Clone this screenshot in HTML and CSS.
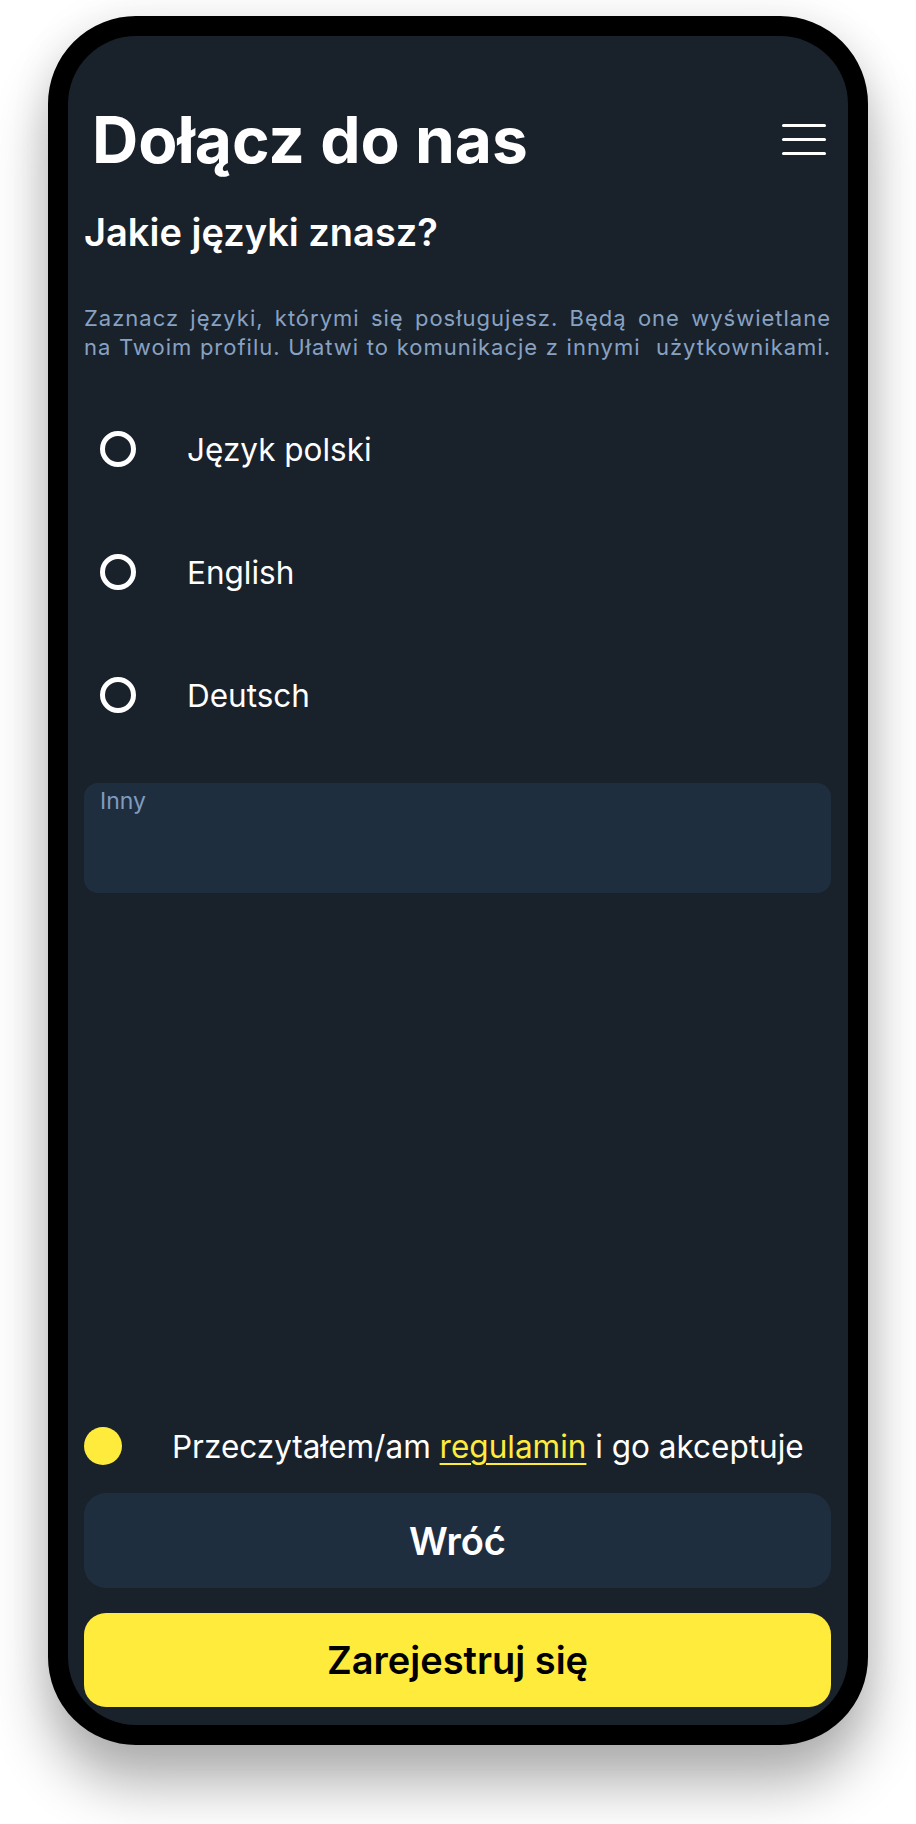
FILE: index.html
```html
<!DOCTYPE html>
<html lang="pl">
<head>
  <meta charset="UTF-8" />
  <meta name="viewport" content="width=device-width, initial-scale=1" />
  <title>Dołącz do nas</title>
  <link rel="stylesheet" href="styles.css">
</head>
<body class="signup-body">
  <div class="phone">
    <div class="screen">
      <header class="top-bar">
        <h1>Dołącz do nas</h1>
        <button class="menu-btn" aria-label="Menu">
          <span></span><span></span><span></span>
        </button>
      </header>

      <h2>Jakie języki znasz?</h2>
      <p class="hint">Zaznacz języki, którymi się posługujesz. Będą one wyświetlane<br>na Twoim profilu. Ułatwi to komunikacje z innymi&nbsp; użytkownikami.</p>

      <form id="langForm">
        <div class="lang-list">
          <label class="lang-option">
            <input type="checkbox" name="lang" value="pl" />
            <span class="ring"></span>
            <span>Język polski</span>
          </label>
          <label class="lang-option">
            <input type="checkbox" name="lang" value="en" />
            <span class="ring"></span>
            <span>English</span>
          </label>
          <label class="lang-option">
            <input type="checkbox" name="lang" value="de" />
            <span class="ring"></span>
            <span>Deutsch</span>
          </label>
        </div>

        <div class="other-field">
          <label for="otherLang">Inny</label>
          <input type="text" id="otherLang" name="otherLang" />
        </div>
      </form>

      <div class="bottom">
        <label class="terms">
          <span class="dot"></span>
          <span>Przeczytałem/am <a href="#">regulamin</a> i go akceptuje</span>
        </label>
        <button type="button" class="btn btn-back">Wróć</button>
        <button type="submit" form="langForm" class="btn btn-primary">Zarejestruj się</button>
      </div>
    </div>
  </div>
</body>
</html>
```

FILE: styles.css
```css
body.signup-body {
  margin: 0;
  padding-bottom: 90px;
  background-color: #ffffff;
  font-family: Inter, "Noto Sans", Arial, sans-serif;
  color: #ffffff;
}

.phone {
  box-sizing: border-box;
  width: 820px;
  height: 1729px;
  margin: 16px 0 0 48px;
  border: 20px solid #000000;
  border-radius: 88px;
  background: #000000;
  box-shadow: 0 40px 55px rgba(0,0,0,0.3), 0 0 40px rgba(0,0,0,0.08);
}

.screen {
  box-sizing: border-box;
  height: 100%;
  padding: 65px 17px 18px 16px;
  border-radius: 68px;
  background-color: #19212b;
  display: flex;
  flex-direction: column;
}

.top-bar {
  display: flex;
  justify-content: space-between;
  align-items: center;
  padding: 0 5px 0 8px;
}

h1 {
  margin: 0;
  font-size: 64px;
  line-height: 77px;
  font-weight: 700;
}

.menu-btn {
  display: flex;
  flex-direction: column;
  gap: 11px;
  width: 44px;
  padding: 0;
  background: none;
  border: none;
  cursor: pointer;
}
.menu-btn span {
  display: block;
  height: 3px;
  border-radius: 2px;
  background-color: #ffffff;
}

h2 {
  margin: 31px 0 0;
  font-size: 38px;
  line-height: 46px;
  font-weight: 600;
}

.hint {
  margin: 49px 0 0;
  font-size: 22px;
  line-height: 29px;
  letter-spacing: 1px;
  color: #88a2c2;
  text-align: justify;
  text-align-last: justify;
}

form {
  margin: 0;
}

.lang-list {
  display: flex;
  flex-direction: column;
  gap: 83px;
  margin-top: 67px;
}

.lang-option {
  display: flex;
  align-items: center;
  height: 40px;
  font-size: 31.5px;
  cursor: pointer;
}
.lang-option input {
  display: none;
}
.ring {
  box-sizing: border-box;
  width: 36px;
  height: 36px;
  margin: 0 51px 0 16px;
  border: 5px solid #ffffff;
  border-radius: 50%;
}
.lang-option input:checked + .ring {
  background-color: #ffeb3b;
  border-color: #ffeb3b;
}

.other-field {
  position: relative;
  margin-top: 68px;
}
.other-field label {
  position: absolute;
  top: 4px;
  left: 16px;
  font-size: 23px;
  color: #7f9bbd;
}
.other-field input {
  box-sizing: border-box;
  width: 100%;
  height: 110px;
  padding: 30px 16px 0;
  border: none;
  border-radius: 14px;
  background-color: #1f2e3f;
  color: #ffffff;
  font-family: inherit;
  font-size: 24px;
  outline: none;
}

.bottom {
  margin-top: auto;
  display: flex;
  flex-direction: column;
}

.terms {
  display: flex;
  align-items: center;
  height: 40px;
  margin-bottom: 27px;
  font-size: 31.5px;
}
.dot {
  width: 38px;
  height: 38px;
  margin-right: 50px;
  border-radius: 50%;
  background-color: #ffeb3b;
}
.terms a {
  color: #ffeb3b;
  text-decoration: underline;
  text-underline-offset: 5px;
  text-decoration-thickness: 2px;
}

.btn {
  height: 95px;
  border: none;
  border-radius: 22px;
  font-family: inherit;
  font-size: 38px;
  font-weight: 600;
  cursor: pointer;
}
.btn-back {
  background-color: #1f2e3f;
  color: #ffffff;
}
.btn-primary {
  height: 94px;
  margin-top: 25px;
  background-color: #ffeb3b;
  color: #000000;
}
```
